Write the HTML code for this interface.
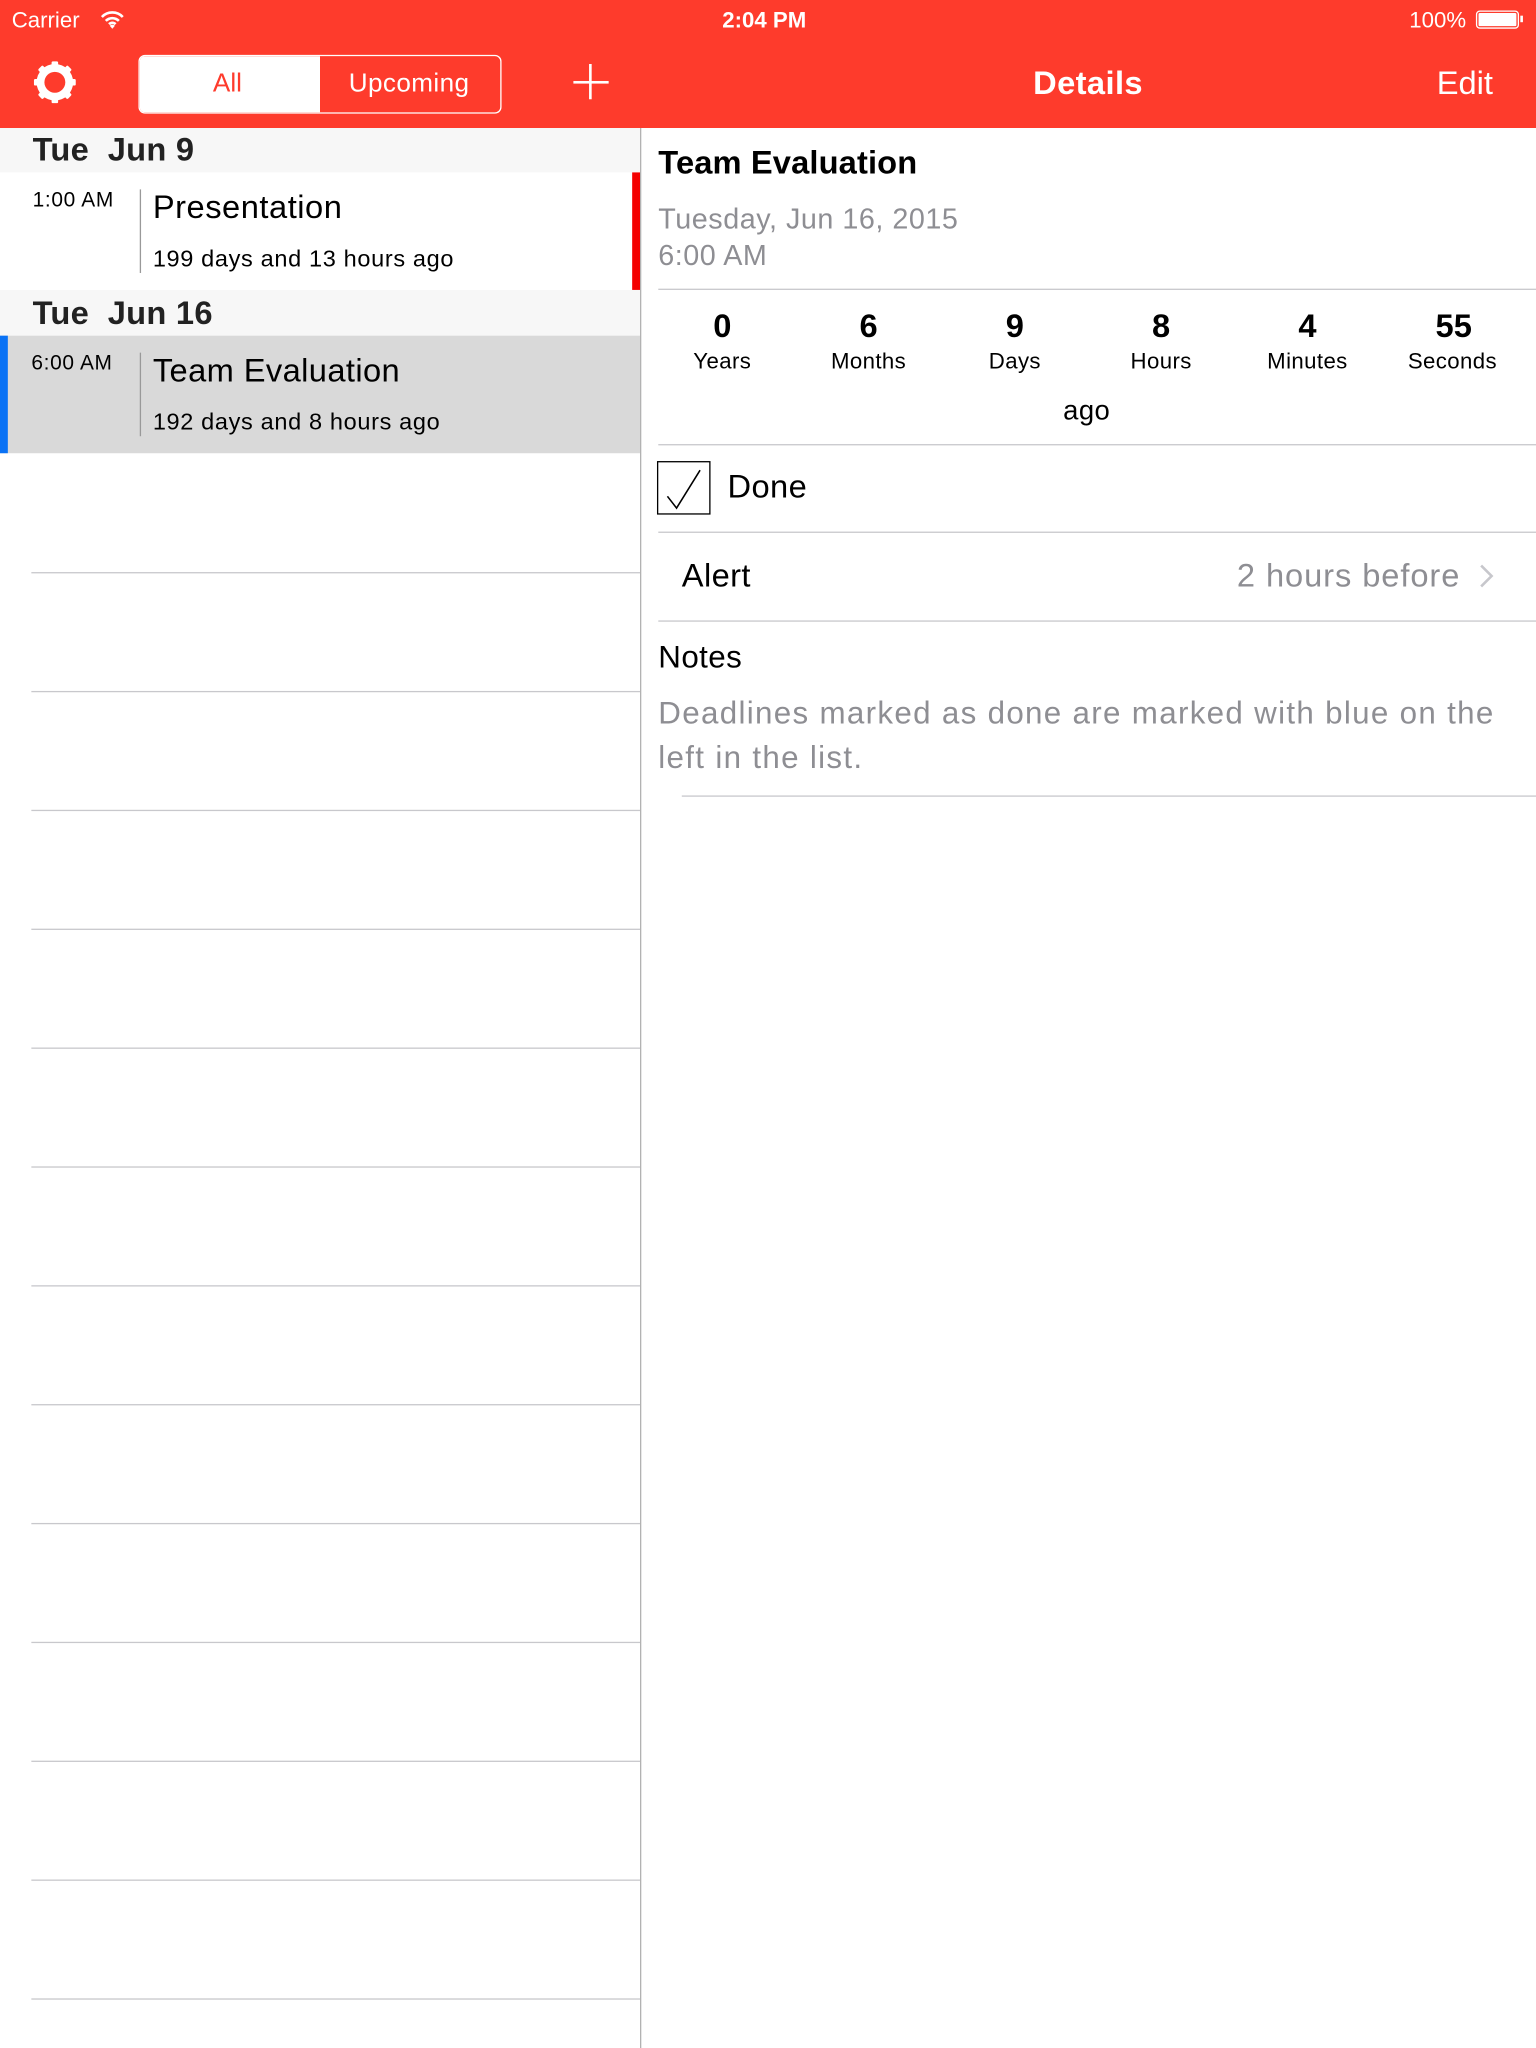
<!DOCTYPE html>
<html><head><meta charset="utf-8"><style>
html,body{margin:0;padding:0;width:1536px;height:2048px;overflow:hidden;background:#fff}
#s{position:absolute;left:0;top:0;width:1176px;height:1568px;transform:scale(1.306122);transform-origin:0 0;font-family:"Liberation Sans",sans-serif;color:#000}
.a{position:absolute;white-space:nowrap}
.t{position:absolute;line-height:1;white-space:nowrap}
.hl{position:absolute;height:1px;background:#c8c8cc}
.c{position:absolute;width:112px;text-align:center}
</style></head><body><div id="s">
<div class="a" style="left:0;top:0;width:1176px;height:98px;background:#fe3b2c"></div>
<div class="t" style="left:9px;top:7px;font-size:17px;color:#fff">Carrier</div>
<svg class="a" style="left:76px;top:7px" width="20" height="16" viewBox="0 0 20 16"><path d="M2 6a11 11 0 0 1 16 0M5 9a7 7 0 0 1 10 0M7.5 11.5a3.5 3.5 0 0 1 5 0" stroke="#fff" stroke-width="2" fill="none"/><path d="M10 15l-2-2.3a3 3 0 0 1 4 0z" fill="#fff"/></svg>
<div class="t" style="left:553px;top:7px;font-size:17px;color:#fff;font-weight:bold">2:04 PM</div>
<div class="t" style="left:1079px;top:7px;font-size:17px;color:#fff">100%</div>
<div class="a" style="left:1130px;top:8px;width:31px;height:12px;border:1px solid #fff;border-radius:3px"><div style="margin:1px;height:10px;background:#fff;border-radius:1px"></div></div>
<div class="a" style="left:1164px;top:12px;width:2px;height:5px;background:#fff"></div>
<svg class="a" style="left:24px;top:45px" width="36" height="36" viewBox="0 0 36 36"><g fill="#fff"><circle cx="18" cy="18" r="14"/><g id="tt"><rect x="15.5" y="2" width="5" height="5" rx="1"/><rect x="15.5" y="29" width="5" height="5" rx="1"/></g><use href="#tt" transform="rotate(45 18 18)"/><use href="#tt" transform="rotate(90 18 18)"/><use href="#tt" transform="rotate(135 18 18)"/></g><circle cx="18" cy="18" r="8" fill="#fe3b2c"/></svg>
<div class="a" style="left:106px;top:42px;width:276px;height:43px;border:1.5px solid #fff;border-radius:5px;overflow:hidden"><div style="position:absolute;left:0;top:0;width:138px;height:100%;background:#fff"></div></div>
<div class="t" style="left:163px;top:54px;font-size:20px;color:#fe3b2c">All</div>
<div class="t" style="left:267px;top:54px;font-size:20px;color:#fff;letter-spacing:0.3px">Upcoming</div>
<div class="a" style="left:439px;top:62px;width:27px;height:2px;background:#fff"></div>
<div class="a" style="left:451px;top:49px;width:2px;height:27px;background:#fff"></div>
<div class="t" style="left:791px;top:52px;font-size:25px;color:#fff;font-weight:bold;letter-spacing:0.3px">Details</div>
<div class="t" style="left:1100px;top:52px;font-size:25px;color:#fff">Edit</div>
<!-- left pane -->
<div class="a" style="left:490px;top:98px;width:1px;height:1470px;background:#b2b2b2"></div>
<div class="a" style="left:0;top:98px;width:490px;height:34px;background:#f7f7f7"></div>
<div class="t" style="left:25px;top:103px;font-size:25px;font-weight:bold;color:#222;letter-spacing:0.2px">Tue&nbsp; Jun 9</div>
<div class="a" style="left:484px;top:132px;width:6px;height:90px;background:#f40000"></div>
<div class="t" style="left:25px;top:146px;font-size:16px;letter-spacing:0.5px">1:00 AM</div>
<div class="a" style="left:107px;top:145px;width:1px;height:64px;background:#999"></div>
<div class="t" style="left:117px;top:147px;font-size:25px;letter-spacing:0.4px">Presentation</div>
<div class="t" style="left:117px;top:189px;font-size:18px;letter-spacing:0.5px">199 days and 13 hours ago</div>
<div class="a" style="left:0;top:222px;width:490px;height:35px;background:#f7f7f7"></div>
<div class="t" style="left:25px;top:228px;font-size:25px;font-weight:bold;color:#222;letter-spacing:0.2px">Tue&nbsp; Jun 16</div>
<div class="a" style="left:0;top:257px;width:490px;height:90px;background:#d9d9d9"></div>
<div class="a" style="left:0;top:257px;width:6px;height:90px;background:#0a72f5"></div>
<div class="t" style="left:24px;top:271px;font-size:16px;letter-spacing:0.5px">6:00 AM</div>
<div class="a" style="left:107px;top:270px;width:1px;height:64px;background:#999"></div>
<div class="t" style="left:117px;top:272px;font-size:25px;letter-spacing:0.3px">Team Evaluation</div>
<div class="t" style="left:117px;top:314px;font-size:18px;letter-spacing:0.5px">192 days and 8 hours ago</div>
<div class="hl" style="left:24px;top:438px;width:466px"></div>
<div class="hl" style="left:24px;top:529px;width:466px"></div>
<div class="hl" style="left:24px;top:620px;width:466px"></div>
<div class="hl" style="left:24px;top:711px;width:466px"></div>
<div class="hl" style="left:24px;top:802px;width:466px"></div>
<div class="hl" style="left:24px;top:893px;width:466px"></div>
<div class="hl" style="left:24px;top:984px;width:466px"></div>
<div class="hl" style="left:24px;top:1075px;width:466px"></div>
<div class="hl" style="left:24px;top:1166px;width:466px"></div>
<div class="hl" style="left:24px;top:1257px;width:466px"></div>
<div class="hl" style="left:24px;top:1348px;width:466px"></div>
<div class="hl" style="left:24px;top:1439px;width:466px"></div>
<div class="hl" style="left:24px;top:1530px;width:466px"></div>
<!-- right pane -->
<div class="t" style="left:504px;top:113px;font-size:25px;font-weight:bold;letter-spacing:0.1px">Team Evaluation</div>
<div class="t" style="left:504px;top:157px;font-size:22px;color:#8e8e93;letter-spacing:0.4px">Tuesday, Jun 16, 2015</div>
<div class="t" style="left:504px;top:185px;font-size:22px;color:#8e8e93;letter-spacing:0.4px">6:00 AM</div>
<div class="hl" style="left:504px;top:221px;width:672px"></div>
<div class="c t" style="left:497px;top:238px;font-size:25px;font-weight:bold">0</div>
<div class="c t" style="left:609px;top:238px;font-size:25px;font-weight:bold">6</div>
<div class="c t" style="left:721px;top:238px;font-size:25px;font-weight:bold">9</div>
<div class="c t" style="left:833px;top:238px;font-size:25px;font-weight:bold">8</div>
<div class="c t" style="left:945px;top:238px;font-size:25px;font-weight:bold">4</div>
<div class="c t" style="left:1057px;top:238px;font-size:25px;font-weight:bold">55</div>
<div class="c t" style="left:497px;top:268px;font-size:17px;letter-spacing:0.3px">Years</div>
<div class="c t" style="left:609px;top:268px;font-size:17px;letter-spacing:0.3px">Months</div>
<div class="c t" style="left:721px;top:268px;font-size:17px;letter-spacing:0.3px">Days</div>
<div class="c t" style="left:833px;top:268px;font-size:17px;letter-spacing:0.3px">Hours</div>
<div class="c t" style="left:945px;top:268px;font-size:17px;letter-spacing:0.3px">Minutes</div>
<div class="c t" style="left:1056px;top:268px;font-size:17px;letter-spacing:0.3px">Seconds</div>
<div class="t" style="left:814px;top:304px;font-size:21px;letter-spacing:0.3px">ago</div>
<div class="hl" style="left:504px;top:340px;width:672px"></div>
<div class="a" style="left:503px;top:353px;width:39px;height:39px;border:1.5px solid #000"></div>
<svg class="a" style="left:504px;top:355px" width="40" height="38"><path d="M7 25L14 34L32 5" stroke="#000" stroke-width="1.2" fill="none"/></svg>
<div class="t" style="left:557px;top:361px;font-size:25px;letter-spacing:0.3px">Done</div>
<div class="hl" style="left:504px;top:407px;width:672px"></div>
<div class="t" style="left:522px;top:429px;font-size:25px;letter-spacing:0.3px">Alert</div>
<div class="t" style="left:947px;top:429px;font-size:25px;color:#8e8e93;letter-spacing:0.7px">2 hours before</div>
<svg class="a" style="left:1132px;top:431px" width="12" height="20"><path d="M2 2l8 8-8 8" stroke="#c7c7cc" stroke-width="2" fill="none"/></svg>
<div class="hl" style="left:504px;top:475px;width:672px"></div>
<div class="t" style="left:504px;top:492px;font-size:24px;letter-spacing:0.3px">Notes</div>
<div class="t" style="left:504px;top:535px;font-size:24px;color:#8e8e93;letter-spacing:1px">Deadlines marked as done are marked with blue on the</div>
<div class="t" style="left:504px;top:569px;font-size:24px;color:#8e8e93;letter-spacing:1px">left in the list.</div>
<div class="hl" style="left:522px;top:609px;width:654px"></div>
</div></body></html>
